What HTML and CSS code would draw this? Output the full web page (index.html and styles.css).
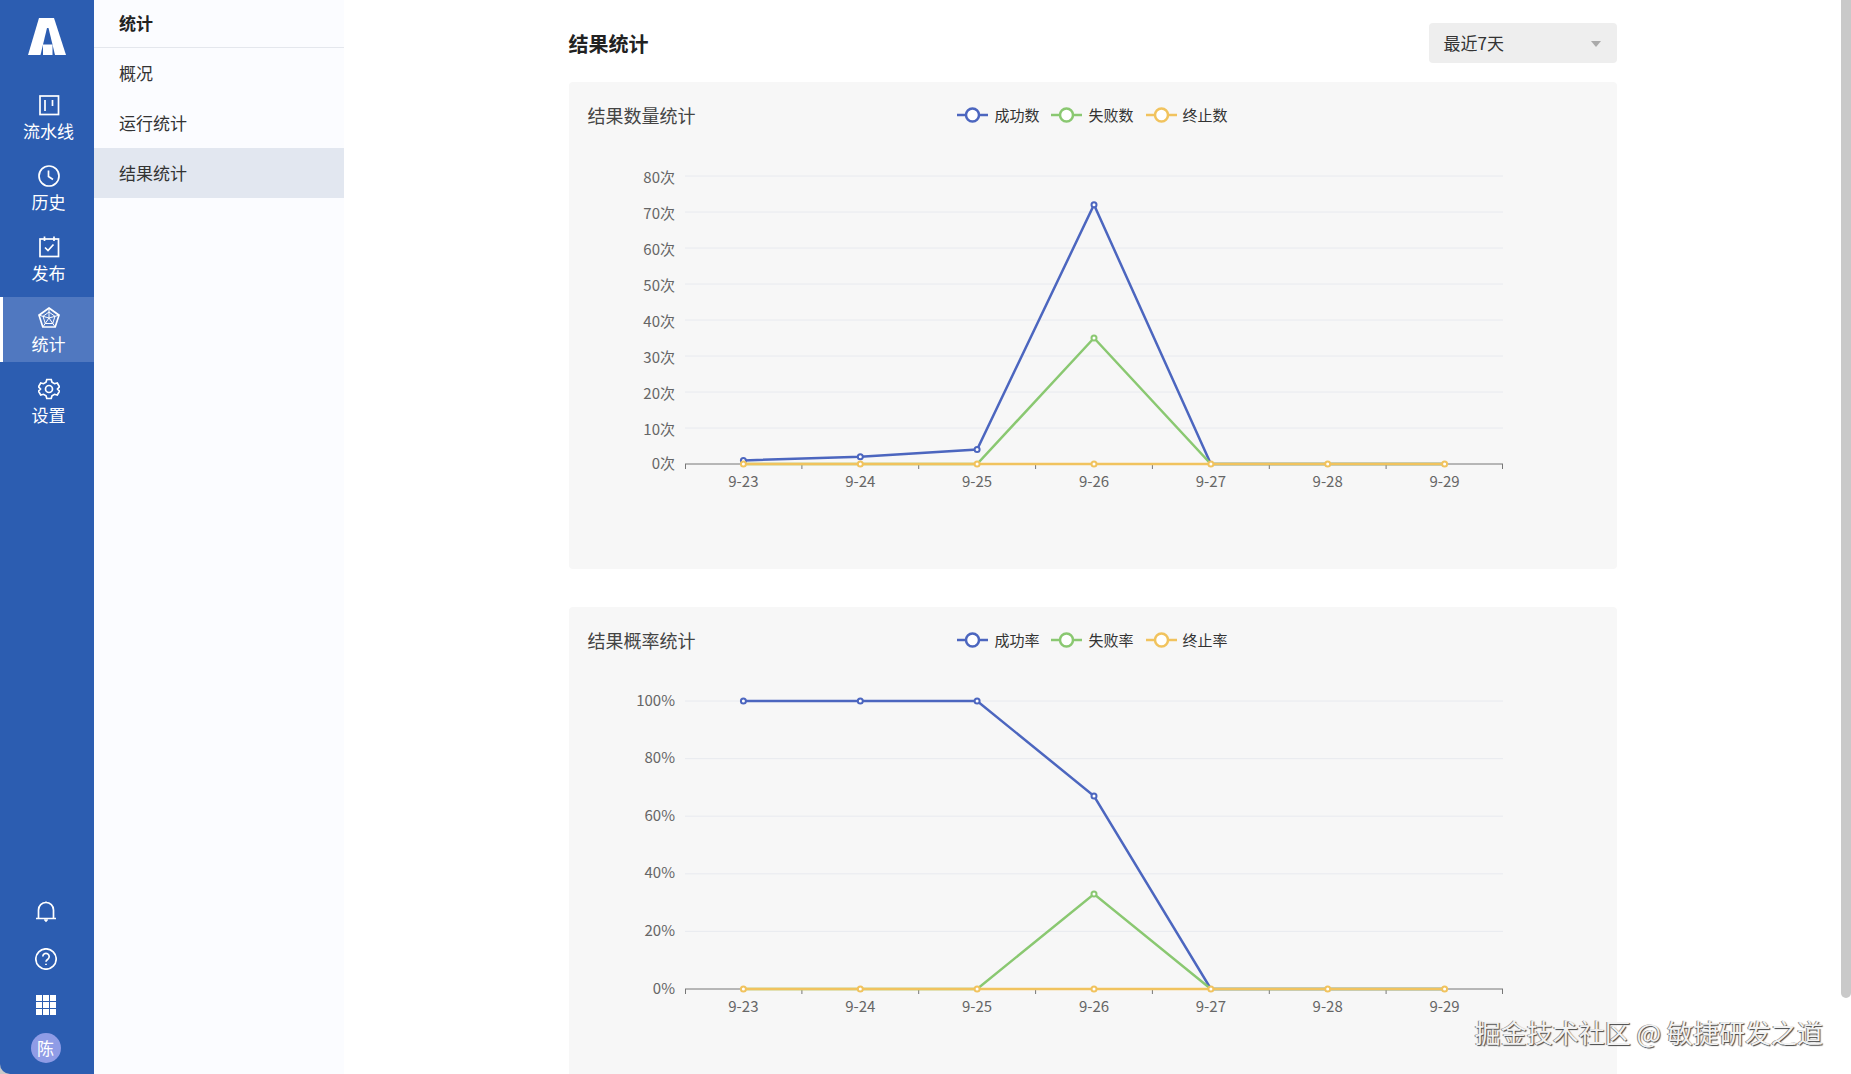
FILE: index.html
```html
<!DOCTYPE html>
<html lang="zh-CN">
<head>
<meta charset="utf-8">
<title>结果统计</title>
<link rel="stylesheet" href="styles.css">
</head>
<body>
<div class="app">
  <aside class="rail">
    <div class="logo">
      <svg width="38" height="37" viewBox="0 0 38 37"><path class="ic-fill" d="M11 0H26L38 37H0Z"/><path class="ic-cut" d="M19 10 20.5 10 27 37H12.500Z"/><path class="ic-fill" d="M15 26.500H24.500V37H15Z"/></svg>
    </div>
    <nav class="rail-nav">
      <a class="rail-item">
        <svg class="rail-icon" viewBox="0 0 22 22"><rect class="ic" x="2" y="2" width="18.500" height="18.500"/><path class="ic" d="M7 6V17M14.500 6V12"/></svg>
        <span>流水线</span>
      </a>
      <a class="rail-item">
        <svg class="rail-icon" viewBox="0 0 22 22"><circle class="ic" cx="11" cy="11" r="10"/><path class="ic" d="M10.500 5.500V11.500L15 14.500"/></svg>
        <span>历史</span>
      </a>
      <a class="rail-item">
        <svg class="rail-icon" viewBox="0 0 22 22"><rect class="ic" x="2" y="3" width="18.500" height="17.500"/><path class="ic" d="M6.500 0.500V5M16 0.500V5M7 11.500 10 14.500 15.500 8.500"/></svg>
        <span>发布</span>
      </a>
      <a class="rail-item is-active">
        <svg class="rail-icon" viewBox="0 0 22 22"><path class="ic" d="M11 1 21 8.200 17.200 20H4.800L1 8.200Z"/><path class="ic-thin" d="M11 5 17 9.300 14.700 16.500H7.300L5 9.300Z"/><path class="ic-thin" d="M11 1V11M21 8.200 11 11M17.200 20 11 11M4.800 20 11 11M1 8.200 11 11"/></svg>
        <span>统计</span>
      </a>
      <a class="rail-item">
        <svg class="rail-icon" viewBox="0 0 22 22"><path class="ic" d="M8.800 1.500H13.200L14 4.300 16.500 5.700 19.300 5 21.500 8.800 19.500 11 21.500 13.200 19.300 17 16.500 16.300 14 17.700 13.200 20.500H8.800L8 17.700 5.500 16.300 2.700 17 0.500 13.200 2.500 11 0.500 8.800 2.700 5 5.500 5.700 8 4.300Z"/><circle class="ic" cx="11" cy="11" r="3.500"/></svg>
        <span>设置</span>
      </a>
    </nav>
    <div class="rail-foot">
      <svg class="foot-icon" viewBox="0 0 22 22"><path class="ic" d="M3.500 17.500V9A7.500 7.500 0 0 1 18.500 9V17.500M1 17.500H21M9.500 18.500 11 20 12.500 18.500M11 1V0.500"/></svg>
      <svg class="foot-icon" viewBox="0 0 22 22"><circle class="ic" cx="11" cy="11" r="10.200"/><path class="ic" d="M7.800 8.500A3.200 3.200 0 1 1 12.800 11.200C11.500 12 11 12.500 11 13.800"/><path class="ic" d="M11 15.800V17"/></svg>
      <svg class="foot-icon" viewBox="0 0 20 20"><path class="ic-fill" d="M0 0H6V6H0ZM7 0H13V6H7ZM14 0H20V6H14ZM0 7H6V13H0ZM7 7H13V13H7ZM14 7H20V13H14ZM0 14H6V20H0ZM7 14H13V20H7ZM14 14H20V20H14Z"/></svg>
      <div class="avatar">陈</div>
    </div>
  </aside>

  <aside class="subnav">
    <div class="subnav-title">统计</div>
    <a class="subnav-item">概况</a>
    <a class="subnav-item">运行统计</a>
    <a class="subnav-item is-active">结果统计</a>
  </aside>

  <main class="main">
    <div class="content">
      <header class="page-head">
        <h1 class="page-title">结果统计</h1>
        <div class="select"><span>最近7天</span><i class="select-arrow"></i></div>
      </header>

      <section class="card">
        <div class="card-head">
          <h2 class="card-title">结果数量统计</h2>
          <div class="legend">
            <span class="legend-item"><svg class="legend-key" viewBox="0 0 31 18"><path class="s-blue" d="M0 9H31"/><circle class="s-blue dot" cx="15.500" cy="9" r="6.500"/></svg>成功数</span>
            <span class="legend-item"><svg class="legend-key" viewBox="0 0 31 18"><path class="s-green" d="M0 9H31"/><circle class="s-green dot" cx="15.500" cy="9" r="6.500"/></svg>失败数</span>
            <span class="legend-item"><svg class="legend-key" viewBox="0 0 31 18"><path class="s-yellow" d="M0 9H31"/><circle class="s-yellow dot" cx="15.500" cy="9" r="6.500"/></svg>终止数</span>
          </div>
          <span></span>
        </div>
        <svg class="chart" viewBox="0 0 1048 422">
          <path class="grid" d="M116 29H934M116 65H934M116 101H934M116 137H934M116 173H934M116 209H934M116 245H934M116 281H934"/>
          <g class="y-label">
            <text x="106" y="29">80次</text><text x="106" y="65">70次</text><text x="106" y="101">60次</text><text x="106" y="137">50次</text><text x="106" y="173">40次</text><text x="106" y="209">30次</text><text x="106" y="245">20次</text><text x="106" y="281">10次</text><text x="106" y="315">0次</text>
          </g>
          <path class="axis" d="M116 317H934M116.500 317V322M232.900 317V322M349.700 317V322M466.600 317V322M583.400 317V322M700.300 317V322M817.100 317V322M933.500 317V322"/>
          <g class="x-label">
            <text x="174.400" y="333">9-23</text><text x="291.300" y="333">9-24</text><text x="408.100" y="333">9-25</text><text x="525" y="333">9-26</text><text x="641.900" y="333">9-27</text><text x="758.700" y="333">9-28</text><text x="875.600" y="333">9-29</text>
          </g>
          <polyline class="s-blue" points="174.400,313.400 291.300,309.800 408.100,302.600 525,57.800 641.900,317 758.700,317 875.600,317"/>
          <g class="s-blue dot"><circle cx="174.400" cy="313.400" r="2.500"/><circle cx="291.300" cy="309.800" r="2.500"/><circle cx="408.100" cy="302.600" r="2.500"/><circle cx="525" cy="57.800" r="2.500"/></g>
          <polyline class="s-green" points="174.400,317 291.300,317 408.100,317 525,191 641.900,317 758.700,317 875.600,317"/>
          <g class="s-green dot"><circle cx="525" cy="191" r="2.500"/></g>
          <polyline class="s-yellow" points="174.400,317 875.600,317"/>
          <g class="s-yellow dot"><circle cx="174.400" cy="317" r="2.500"/><circle cx="291.300" cy="317" r="2.500"/><circle cx="408.100" cy="317" r="2.500"/><circle cx="525" cy="317" r="2.500"/><circle cx="641.900" cy="317" r="2.500"/><circle cx="758.700" cy="317" r="2.500"/><circle cx="875.600" cy="317" r="2.500"/></g>
        </svg>
      </section>

      <section class="card">
        <div class="card-head">
          <h2 class="card-title">结果概率统计</h2>
          <div class="legend">
            <span class="legend-item"><svg class="legend-key" viewBox="0 0 31 18"><path class="s-blue" d="M0 9H31"/><circle class="s-blue dot" cx="15.500" cy="9" r="6.500"/></svg>成功率</span>
            <span class="legend-item"><svg class="legend-key" viewBox="0 0 31 18"><path class="s-green" d="M0 9H31"/><circle class="s-green dot" cx="15.500" cy="9" r="6.500"/></svg>失败率</span>
            <span class="legend-item"><svg class="legend-key" viewBox="0 0 31 18"><path class="s-yellow" d="M0 9H31"/><circle class="s-yellow dot" cx="15.500" cy="9" r="6.500"/></svg>终止率</span>
          </div>
          <span></span>
        </div>
        <svg class="chart" viewBox="0 0 1048 422">
          <path class="grid" d="M116 29H934M116 86.600H934M116 144.200H934M116 201.800H934M116 259.400H934"/>
          <g class="y-label">
            <text x="106" y="27">100%</text><text x="106" y="84.600">80%</text><text x="106" y="142.200">60%</text><text x="106" y="199.800">40%</text><text x="106" y="257.400">20%</text><text x="106" y="315">0%</text>
          </g>
          <path class="axis" d="M116 317H934M116.500 317V322M232.900 317V322M349.700 317V322M466.600 317V322M583.400 317V322M700.300 317V322M817.100 317V322M933.500 317V322"/>
          <g class="x-label">
            <text x="174.400" y="333">9-23</text><text x="291.300" y="333">9-24</text><text x="408.100" y="333">9-25</text><text x="525" y="333">9-26</text><text x="641.900" y="333">9-27</text><text x="758.700" y="333">9-28</text><text x="875.600" y="333">9-29</text>
          </g>
          <polyline class="s-blue" points="174.400,29 291.300,29 408.100,29 525,124 641.900,317 758.700,317 875.600,317"/>
          <g class="s-blue dot"><circle cx="174.400" cy="29" r="2.500"/><circle cx="291.300" cy="29" r="2.500"/><circle cx="408.100" cy="29" r="2.500"/><circle cx="525" cy="124" r="2.500"/></g>
          <polyline class="s-green" points="174.400,317 291.300,317 408.100,317 525,222 641.900,317 758.700,317 875.600,317"/>
          <g class="s-green dot"><circle cx="525" cy="222" r="2.500"/></g>
          <polyline class="s-yellow" points="174.400,317 875.600,317"/>
          <g class="s-yellow dot"><circle cx="174.400" cy="317" r="2.500"/><circle cx="291.300" cy="317" r="2.500"/><circle cx="408.100" cy="317" r="2.500"/><circle cx="525" cy="317" r="2.500"/><circle cx="641.900" cy="317" r="2.500"/><circle cx="758.700" cy="317" r="2.500"/><circle cx="875.600" cy="317" r="2.500"/></g>
        </svg>
      </section>
    </div>
  </main>

  <div class="scrollbar"><div class="scroll-thumb"></div></div>
  <div class="watermark">掘金技术社区 @ 敏捷研发之道</div>
</div>
</body>
</html>
```
FILE: styles.css
```css
* { box-sizing: border-box; }
html, body { margin: 0; height: 100%; overflow: hidden; }
body {
  font-family: "Noto Sans CJK SC", "Noto Sans", sans-serif;
  color: #333;
  background: #c9c9c9;
}
.app { position: relative; display: flex; height: 1074px; overflow: hidden; }

/* left rail */
.rail {
  flex: 0 0 94px;
  display: flex;
  flex-direction: column;
  background: #2c5db1;
  color: #fff;
  border-bottom-left-radius: 10px;
}
.logo { display: flex; justify-content: center; height: 84px; padding: 18px 0 0 0; }
.rail-nav { display: flex; flex-direction: column; gap: 6px; }
.rail-item {
  height: 65px;
  display: flex;
  flex-direction: column;
  align-items: center;
  padding-top: 10px;
  border-left: 3px solid transparent;
  font-size: 17px;
  line-height: 24px;
  gap: 3px;
}
.rail-item.is-active { background: #5078c0; border-left-color: #fff; }
.rail-icon { width: 22px; height: 22px; flex: none; }
.ic { fill: none; stroke: #fff; stroke-width: 1.7; }
.ic-thin { fill: none; stroke: #fff; stroke-width: 1; }
.ic-fill { fill: #fff; }
.ic-cut { fill: #2c5db1; }
.rail-foot {
  margin-top: auto;
  display: flex;
  flex-direction: column;
  align-items: center;
  padding-right: 3px;
  padding-bottom: 11px;
}
.foot-icon { width: 22px; height: 22px; margin-bottom: 25px; flex: none; }
.foot-icon:nth-child(3) { width: 20px; height: 20px; margin-bottom: 18px; }
.avatar {
  width: 30px;
  height: 30px;
  border-radius: 50%;
  background: #8f9ce6;
  font-size: 17px;
  line-height: 30px;
  text-align: center;
}

/* secondary nav */
.subnav { flex: 0 0 250px; background: #fbfcff; }
.subnav-title {
  height: 48px;
  padding-left: 25px;
  font-size: 17px;
  font-weight: 700;
  line-height: 46px;
  color: #222;
  border-bottom: 1px solid #e4e7ed;
}
.subnav-item {
  display: block;
  height: 50px;
  padding-left: 25px;
  font-size: 17px;
  line-height: 50px;
  color: #333;
}
.subnav-item.is-active { background: #e2e7f0; }

/* main area */
.main { flex: 1; min-width: 0; background: #fff; }
.content { width: 1048px; margin: 0 auto; }
.page-head {
  display: flex;
  justify-content: space-between;
  align-items: center;
  height: 40px;
  margin: 23px 0 19px;
}
.page-title { margin: 0; font-size: 20px; font-weight: 700; color: #222; }
.select {
  position: relative;
  width: 188px;
  height: 40px;
  padding-left: 15px;
  border-radius: 4px;
  background: #eee;
  font-size: 17px;
  line-height: 40px;
}
.select-arrow {
  position: absolute;
  right: 16px;
  top: 18px;
  border: 5.500px solid transparent;
  border-top: 6px solid #aaa;
  border-bottom: 0;
}

.card { height: 487px; margin-bottom: 38px; background: #f7f7f7; border-radius: 4px; }
.card-head {
  display: grid;
  grid-template-columns: 1fr auto 1fr;
  align-items: center;
  height: 65px;
  padding: 0 19px;
}
.card-title { margin: 0; font-size: 18px; font-weight: 400; color: #444; }
.legend { display: flex; gap: 12px; font-size: 15px; color: #333; }
.legend-item { display: flex; align-items: center; gap: 6px; }
.legend-key { width: 31px; height: 18px; flex: none; }

.chart { display: block; width: 1048px; height: 422px; }
.grid { fill: none; stroke: #e8eaef; stroke-width: 1; }
.axis { fill: none; stroke: #777; stroke-width: 1; }
.y-label text { font-size: 15px; fill: #666; text-anchor: end; dominant-baseline: central; }
.x-label text { font-size: 15px; fill: #666; text-anchor: middle; dominant-baseline: central; }
.s-blue, .s-green, .s-yellow { fill: none; stroke-width: 2.500; }
.s-blue { stroke: #4c66bf; }
.s-green { stroke: #8ac871; }
.s-yellow { stroke: #f1c35e; }
.dot { fill: #fff; stroke-width: 2; }
.legend-key .dot { stroke-width: 2.500; }

/* scrollbar + overlay */
.scrollbar { flex: 0 0 10px; background: #fff; }
.scroll-thumb { height: 998px; background: #c9c9c9; border-radius: 0 0 5px 5px; }
.watermark {
  position: absolute;
  right: 28px;
  bottom: 23px;
  font-size: 26px;
  line-height: 38px;
  white-space: nowrap;
  color: #f2f2f2;
  text-shadow: 1px 1px 1px #444, -1px 0 0 #888;
}
```
